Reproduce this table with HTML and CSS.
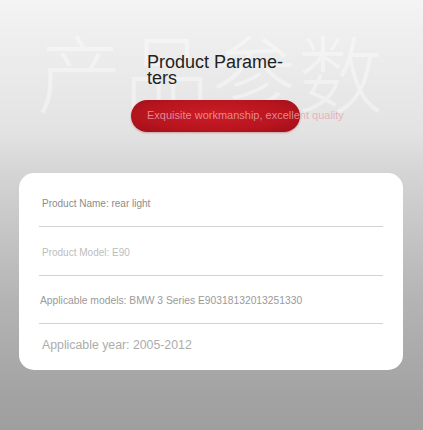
FILE: index.html
```html
<!DOCTYPE html>
<html lang="en">
<head>
<meta charset="utf-8">
<link rel="stylesheet" href="styles.css">
</head>
<body>
<div class="page">
  <header class="hero">
    <div class="watermark">产品参数</div>
    <h1 class="title">Product Parame&shy;ters</h1>
    <div class="pill">Exquisite workmanship, excellent quality</div>
  </header>
  <section class="card">
    <div class="row r1">Product Name: rear light</div>
    <div class="row r2">Product Model: E90</div>
    <div class="row r3">Applicable models: BMW 3 Series E90318132013251330</div>
    <div class="row r4">Applicable year: 2005-2012</div>
  </section>
</div>
</body>
</html>
```
FILE: styles.css
```css
html, body { margin: 0; padding: 0; }
body {
  width: 423px;
  height: 430px;
  overflow: hidden;
  font-family: "Liberation Sans", Arial, sans-serif;
}
.page {
  width: 423px;
  height: 430px;
  background: linear-gradient(#f4f4f4 0px, #eeeeee 40px, #e3e3e3 130px, #d4d4d4 175px, #b4b4b4 300px, #a2a2a2 400px, #9f9f9f 430px);
  overflow: hidden;
}
.hero {
  position: relative;
  height: 173px;
  box-sizing: border-box;
  padding-top: 54px;
}
.watermark {
  position: absolute;
  left: 37px;
  top: 20px;
  font-family: "Noto Sans CJK SC", sans-serif;
  font-weight: 300;
  font-size: 85px;
  line-height: 100px;
  letter-spacing: 2px;
  color: rgba(255, 255, 255, 0.38);
  white-space: nowrap;
}
.title {
  position: relative;
  margin: 0 0 0 147px;
  width: 145px;
  font-size: 18px;
  font-weight: normal;
  line-height: 16px;
  color: #222;
  hyphens: manual;
}
.pill {
  position: relative;
  margin: 14px 0 0 131px;
  width: 169px;
  height: 32px;
  box-sizing: border-box;
  padding-left: 16px;
  border-radius: 16px;
  background: radial-gradient(ellipse at 50% 45%, #cc1c26 0%, #b8151f 60%, #9c0f18 100%);
  box-shadow: 0 1px 2px rgba(150, 0, 0, 0.3);
  font-size: 11px;
  line-height: 31px;
  white-space: nowrap;
  color: rgba(232, 165, 178, 0.82);
}
.card {
  margin: 0 20px 0 19px;
  height: 197px;
  box-sizing: border-box;
  padding: 5px 20px 0 20px;
  background: #fff;
  border-radius: 15px;
}
.row {
  height: 48px;
  display: flex;
  align-items: center;
  padding: 2px 0 0 3px;
  box-sizing: border-box;
  border-bottom: 1px solid #d2d2d2;
  font-size: 10px;
  white-space: nowrap;
}
.row.r1 { height: 49px; color: #8c8c8c; }
.row.r2 { height: 49px; color: #bdbdbd; }
.row.r3 { color: #9a9a9a; padding-left: 1px; font-size: 10.3px; }
.row.r4 { border-bottom: none; height: 42px; padding-top: 0; color: #acacac; font-size: 12.3px; }
```
